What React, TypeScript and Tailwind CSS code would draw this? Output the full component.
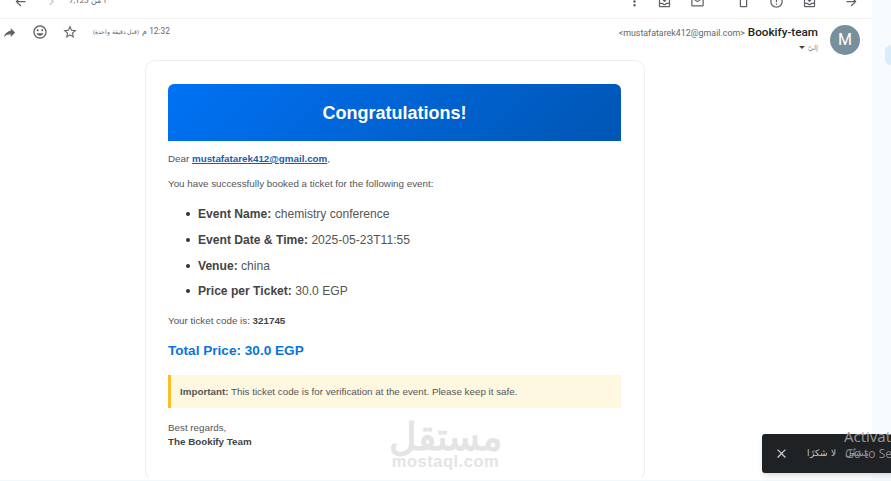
import { MdArrowBack, MdArrowForward, MdChevronRight, MdMoreVert, MdOutlineMoveToInbox, MdOutlineMarkunread, MdOutlineDelete, MdErrorOutline, MdReply, MdStarBorder, MdOutlineInsertEmoticon, MdClose } from "react-icons/md";

const items = [
  ["Event Name:", "chemistry conference"],
  ["Event Date & Time:", "2025-05-23T11:55"],
  ["Venue:", "china"],
  ["Price per Ticket:", "30.0 EGP"],
];

export default function App() {
  return (
    <div className="relative flex w-[891px] h-[481px] overflow-hidden bg-white font-['Liberation_Sans',sans-serif] text-[#555]">
      <div className="flex flex-col w-[872px] h-full">
        <div className="h-[19px] shrink-0 border-b border-[#f1f1f1] overflow-hidden">
          <div className="flex items-center h-[20px] w-full -mt-[9px] text-[#5f6368]">
            <MdArrowBack size={15} className="ml-[13px]" />
            <MdChevronRight size={15} className="ml-[16px] text-[#c4c7c9]" />
            <span className="ml-[12px] w-[36px] text-[8px] font-['Roboto',sans-serif] whitespace-nowrap" dir="rtl">1 من 7,125</span>
            <MdMoreVert size={15} className="ml-[520px]" />
            <MdOutlineMoveToInbox size={15} className="ml-[15px]" />
            <MdOutlineMarkunread size={15} className="ml-[18px]" />
            <MdOutlineDelete size={15} className="ml-[31px]" />
            <MdErrorOutline size={15} className="ml-[18px]" />
            <MdOutlineMoveToInbox size={15} className="ml-[18px]" />
            <MdArrowForward size={15} className="ml-[27px]" />
          </div>
        </div>

        <div className="flex h-[41px] shrink-0 justify-between">
          <div className="flex items-start pt-[5px] text-[#5f6368]">
            <MdReply size={15} className="ml-[2px] mt-[1px] -scale-x-100" />
            <MdOutlineInsertEmoticon size={16} className="ml-[15px]" />
            <MdStarBorder size={16} className="ml-[14px]" />
            <div className="flex items-center ml-[15px] mt-[2px] h-[11px] whitespace-nowrap font-['Roboto',sans-serif]" dir="rtl">
              <span className="text-[8.3px]">12:32 م</span>
              <span className="mr-[3px] text-[6px]">(قبل دقيقة واحدة)</span>
            </div>
          </div>
          <div className="flex items-start pt-[5px]">
            <div className="flex flex-col items-end">
              <div className="flex items-baseline font-['Roboto',sans-serif] whitespace-nowrap">
                <span className="text-[8.85px] text-[#666]">&lt;mustafatarek412@gmail.com&gt;</span>
                <span className="ml-[3px] text-[11.7px] font-medium text-[#222]">Bookify-team</span>
              </div>
              <div className="flex items-center mt-[1px] text-[7px] text-[#888]">
                <span className="w-0 h-0 border-l-[3px] border-r-[3px] border-t-[3px] border-l-transparent border-r-transparent border-t-[#444] mr-[3px]" />
                <span>إليّ</span>
              </div>
            </div>
            <div className="flex items-center justify-center w-[30px] h-[30px] ml-[12px] mr-[12px] mt-[1px] rounded-full bg-[#78909c] text-white text-[16px] font-['Roboto',sans-serif]">M</div>
          </div>
        </div>

        <div className="ml-[145px] w-[500px] flex-1 border border-[#eeeeee] border-b-transparent rounded-[10px] pl-[22px] pr-[23px] pt-[23px] text-[9.8px] leading-[12px]">
          <div className="flex items-center justify-center h-[57px] rounded-t-[6px] bg-[linear-gradient(135deg,#0072f5,#0056b3)] text-white text-[18px] font-bold">Congratulations!</div>
          <p className="mt-[12px]">Dear <a className="font-bold text-[#1a5ea8] underline">mustafatarek412@gmail.com</a>,</p>
          <p className="mt-[13px]">You have successfully booked a ticket for the following event:</p>
          <ul className="mt-[17.4px] ml-[30px] text-[12.1px] leading-[14px]">
            {items.map(([a, b]) => (
              <li key={a} className="relative flex items-center gap-[8px] -ml-[12px] mb-[11.6px]">
                <span className="w-[4px] h-[4px] rounded-full bg-[#333] shrink-0" />
                <span><b className="text-[#444]">{a}</b> {b}</span>
              </li>
            ))}
          </ul>
          <p className="mt-[16.5px]">Your ticket code is: <b className="text-[#444]">321745</b></p>
          <p className="mt-[16px] text-[13.6px] leading-[16px] font-bold text-[#0b74d8]">Total Price: 30.0 EGP</p>
          <div className="flex items-center mt-[16px] h-[33px] pl-[9px] pt-[1px] border-l-[3px] border-[#fbbf24] bg-[#fff8e1]">
            <p><b>Important:</b> This ticket code is for verification at the event. Please keep it safe.</p>
          </div>
          <p className="mt-[14px]">Best regards,</p>
          <p className="mt-[2px] font-bold text-[#444]">The Bookify Team</p>
        </div>
      </div>
      <div className="flex-1 bg-[#f7fbfd]" />

      <div className="absolute right-0 top-[45px] w-[6px] h-[20px] rounded-l-full bg-[#d8ecfb]" />
      <div className="absolute left-0 bottom-0 w-full h-[1px] bg-[#f0fafb]" />

      <div className="absolute left-[389px] top-[416px] flex flex-col items-center text-[#e4e4e4] leading-none select-none">
        <span className="text-[38px] h-[36px] font-bold font-['Noto_Sans','Noto_Sans_CJK_SC',sans-serif]" dir="rtl">مستقل</span>
        <span className="text-[16.5px] mt-[1px] font-bold tracking-[0.5px]">mostaql.com</span>
      </div>

      <div className="absolute left-[762px] top-[434px] flex items-center w-[140px] h-[39px] rounded-[3px] bg-[#1e2224] shadow-md text-[#c8c8c8]">
        <MdClose size={15} className="ml-[12px]" />
        <span className="ml-[22px] w-[25px] text-[9px] whitespace-nowrap" dir="rtl">لا شكرًا</span>
        <span className="ml-[9px] text-[9px] text-[#7ba7d7] whitespace-nowrap" dir="rtl">مشغّل</span>
      </div>
      <div className="absolute left-[844px] top-[425px] text-[#9a9a9a] text-[15px] whitespace-nowrap font-['Open_Sans',sans-serif]">Activate</div>
      <div className="absolute left-[845px] top-[445px] text-[#8a8a8a] text-[12px] whitespace-nowrap font-['Open_Sans',sans-serif]">Go to Settings</div>
    </div>
  );
}
